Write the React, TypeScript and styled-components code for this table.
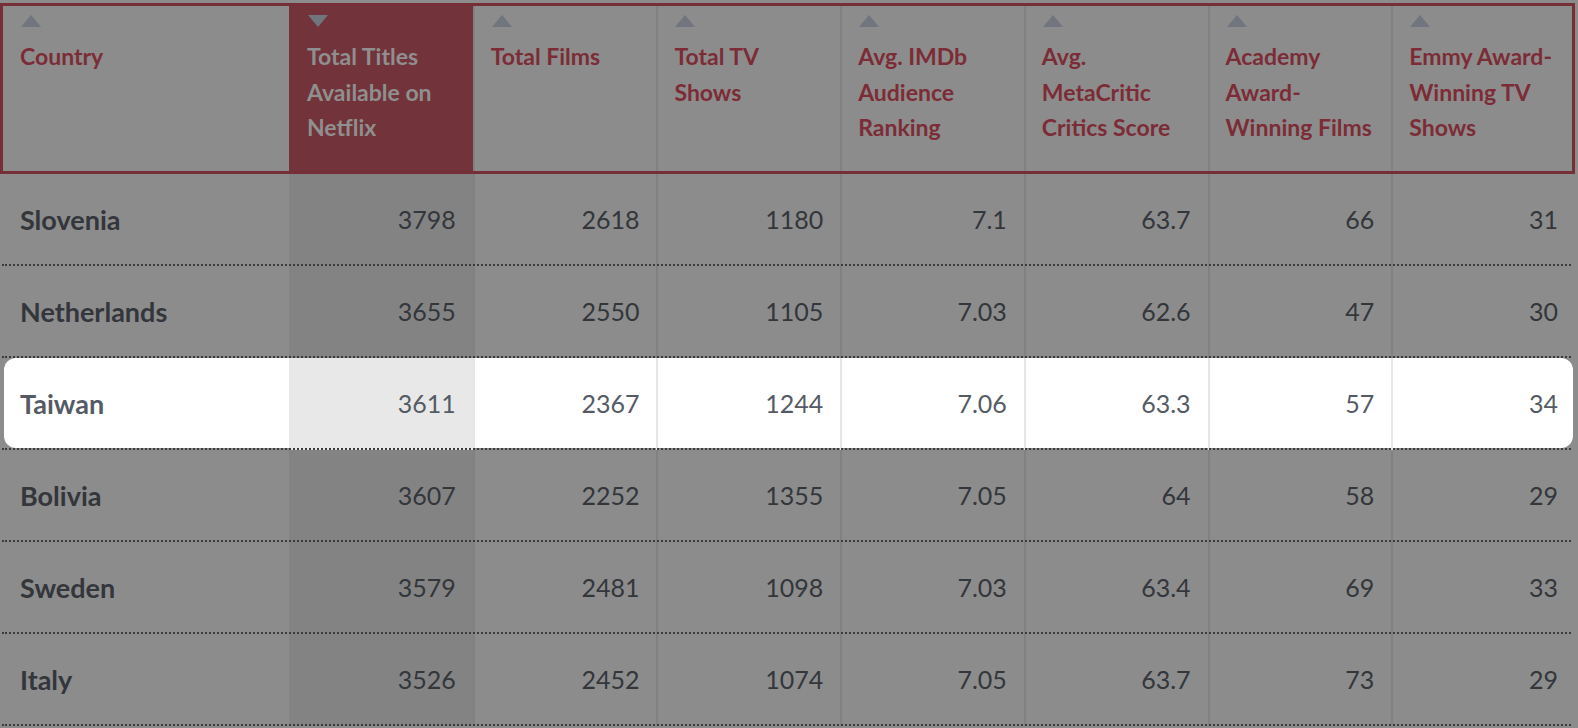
import React from "react";
import styled, { createGlobalStyle, css } from "styled-components";

const GlobalStyle = createGlobalStyle`
  html, body {
    margin: 0;
    padding: 0;
    background: #8c8c8c;
  }
  body {
    font-family: Lato, "Open Sans", "Liberation Sans", sans-serif;
    overflow: hidden;
  }
`;

const COLS = "289px repeat(7, 1fr)";

const Table = styled.div`
  width: 1575px;
  padding-top: 3px;
`;

const HeaderRow = styled.div`
  position: relative;
  display: grid;
  grid-template-columns: ${COLS};
  height: 171px;
  &::after {
    content: "";
    position: absolute;
    inset: 0;
    border: 3px solid #772f37;
    pointer-events: none;
  }
`;

const HeaderCell = styled.div<{ $sorted?: boolean; $first?: boolean; $divider?: boolean }>`
  display: flex;
  flex-direction: column;
  align-items: flex-start;
  gap: 12px;
  padding: 12px 6px 0 ${(p) => (p.$first ? 20 : 18)}px;
  background: ${(p) => (p.$sorted ? "#73333a" : "transparent")};
  box-shadow: ${(p) => (p.$divider ? "inset 2px 0 0 #818181" : "none")};
  color: ${(p) => (p.$sorted ? "#8f8f8f" : "#7c2c36")};
  font-size: 23px;
  font-weight: 700;
  line-height: 35.5px;
`;

const Arrow = styled.span<{ $down?: boolean }>`
  display: block;
  width: 0;
  height: 0;
  margin-left: 1px;
  border-left: 10px solid transparent;
  border-right: 10px solid transparent;
  ${(p) =>
    p.$down
      ? css`border-top: 12px solid #71757d;`
      : css`border-bottom: 12px solid #71757d;`}
`;

const Label = styled.div`
  display: flex;
  flex-direction: column;
`;

const LabelLine = styled.span`
  white-space: nowrap;
`;

const Row = styled.div<{ $hl?: boolean }>`
  position: relative;
  z-index: 0;
  display: grid;
  grid-template-columns: ${COLS};
  height: 92px;
  ${(p) =>
    p.$hl &&
    css`
      &::before {
        content: "";
        position: absolute;
        left: 4px;
        right: 2px;
        top: 0;
        bottom: 2px;
        border-radius: 12px;
        background: #ffffff;
        z-index: -1;
      }
    `}
  &::after {
    content: "";
    position: absolute;
    left: 2px;
    right: 4px;
    bottom: 0;
    height: 0;
    border-bottom: 2px dotted #3a3b3d;
  }
`;

const Cell = styled.div<{ $sorted?: boolean; $divider?: boolean; $hl?: boolean; $name?: boolean }>`
  display: flex;
  align-items: center;
  justify-content: ${(p) => (p.$name ? "flex-start" : "flex-end")};
  padding: 0 17px 2px ${(p) => (p.$name ? 20 : 18)}px;
  background: ${(p) => (p.$sorted ? (p.$hl ? "#e8e8e8" : "#838383") : "transparent")};
  box-shadow: ${(p) =>
    p.$divider ? `inset 2px 0 0 ${p.$hl ? "#e6e6e6" : "#818181"}` : "none"};
  font-size: ${(p) => (p.$name ? 27 : 25)}px;
  font-weight: ${(p) => (p.$name ? 700 : 400)};
  color: ${(p) => (p.$hl ? "#555b64" : "#33363b")};
`;

const headers: { lines: string[]; sorted?: boolean }[] = [
  { lines: ["Country"] },
  { lines: ["Total Titles", "Available on", "Netflix"], sorted: true },
  { lines: ["Total Films"] },
  { lines: ["Total TV", "Shows"] },
  { lines: ["Avg. IMDb", "Audience", "Ranking"] },
  { lines: ["Avg.", "MetaCritic", "Critics Score"] },
  { lines: ["Academy", "Award-", "Winning Films"] },
  { lines: ["Emmy Award-", "Winning TV", "Shows"] },
];

const rows: { country: string; values: string[]; hl?: boolean }[] = [
  { country: "Slovenia", values: ["3798", "2618", "1180", "7.1", "63.7", "66", "31"] },
  { country: "Netherlands", values: ["3655", "2550", "1105", "7.03", "62.6", "47", "30"] },
  { country: "Taiwan", values: ["3611", "2367", "1244", "7.06", "63.3", "57", "34"], hl: true },
  { country: "Bolivia", values: ["3607", "2252", "1355", "7.05", "64", "58", "29"] },
  { country: "Sweden", values: ["3579", "2481", "1098", "7.03", "63.4", "69", "33"] },
  { country: "Italy", values: ["3526", "2452", "1074", "7.05", "63.7", "73", "29"] },
];

export default function App() {
  return (
    <>
      <GlobalStyle />
      <Table>
        <HeaderRow>
          {headers.map((h, i) => (
            <HeaderCell key={i} $first={i === 0} $sorted={h.sorted} $divider={i >= 2}>
              <Arrow $down={h.sorted} />
              <Label>
                {h.lines.map((l, j) => (
                  <LabelLine key={j}>{l}</LabelLine>
                ))}
              </Label>
            </HeaderCell>
          ))}
        </HeaderRow>
        {rows.map((r) => (
          <Row key={r.country} $hl={r.hl}>
            <Cell $name $hl={r.hl}>
              {r.country}
            </Cell>
            {r.values.map((v, i) => (
              <Cell key={i} $sorted={i === 0} $divider={i >= 1} $hl={r.hl}>
                {v}
              </Cell>
            ))}
          </Row>
        ))}
      </Table>
    </>
  );
}
